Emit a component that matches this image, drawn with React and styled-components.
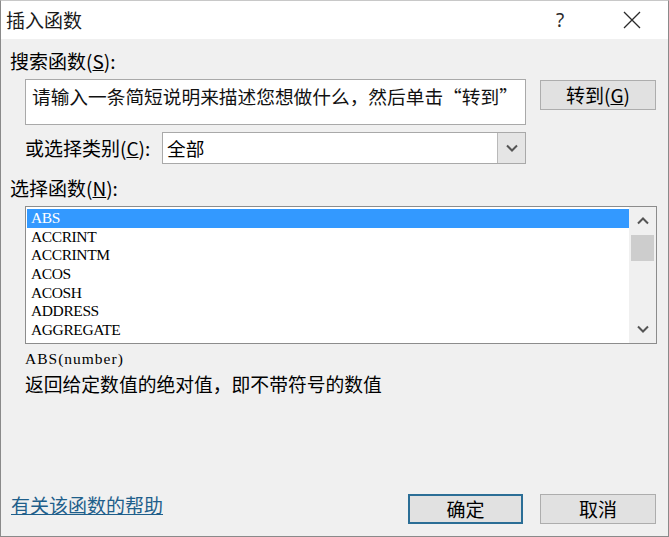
import React from "react";
import styled, { createGlobalStyle } from "styled-components";

const GlobalStyle = createGlobalStyle`
  html, body { margin: 0; padding: 0; background: #ffffff; }
  * { box-sizing: border-box; }
`;

const CJK = `"Noto Sans CJK SC", "Noto Sans", sans-serif`;
const SERIF = `"Liberation Serif", serif`;

const Dialog = styled.div`
  width: 669px;
  height: 537px;
  display: flex;
  flex-direction: column;
  border: 1px solid #8a8a8a;
  border-top-color: #c8c8c8;
  background: #f0f0f0;
  font-family: ${CJK};
  color: #000;
`;

const TitleBar = styled.div`
  height: 38px;
  flex: none;
  display: flex;
  align-items: center;
  background: #ffffff;
`;

const Title = styled.div`
  flex: 1;
  margin-left: 5px;
  font-size: 19px;
  line-height: 24px;
  color: #1a1a1a;
`;

const TitleButton = styled.div`
  width: 46px;
  height: 38px;
  display: flex;
  align-items: center;
  justify-content: center;
  font-family: "Noto Sans", sans-serif;
  font-size: 19px;
  color: #2a2a2a;
`;

const TitleButtons = styled.div`
  display: flex;
  gap: 26px;
  margin-right: 13px;
`;

const Body = styled.div`
  flex: 1;
  display: flex;
  flex-direction: column;
  padding: 0 12px 12px 9px;
`;

const Label = styled.div`
  flex: none;
  width: ${(p) => (p.$w ? `${p.$w}px` : "auto")};
  font-size: 19px;
  line-height: 24px;
  margin-top: ${(p) => p.$mt}px;
  white-space: nowrap;
`;

const Row = styled.div`
  display: flex;
  align-items: ${(p) => p.$align || "flex-start"};
  margin-top: ${(p) => p.$mt}px;
  margin-left: 15px;
`;

const SearchBox = styled.div`
  width: 501px;
  height: 46px;
  background: #fff;
  border: 1px solid #a9a9a9;
  padding: 4px 6px;
  font-size: 18.7px;
  line-height: 24px;
  white-space: nowrap;
  color: #111;
`;

const Button = styled.div`
  width: ${(p) => p.$w}px;
  height: 30px;
  display: flex;
  align-items: center;
  justify-content: center;
  background: #e1e1e1;
  border: ${(p) => (p.$primary ? "2px solid #2b6e96" : "1px solid #adadad")};
  font-size: 19px;
  line-height: 24px;
  margin-left: ${(p) => p.$ml || 0}px;
  margin-top: ${(p) => p.$mt || 0}px;
`;

const Select = styled.div`
  width: 364px;
  height: 32px;
  display: flex;
  background: #fff;
  border: 1px solid #a9a9a9;
`;

const SelectValue = styled.div`
  flex: 1;
  padding-left: 4px;
  font-size: 18.7px;
  line-height: 30px;
`;

const DropButton = styled.div`
  width: 28px;
  display: flex;
  align-items: center;
  justify-content: center;
  background: #e5e5e5;
  border-left: 1px solid #b9b9b9;
`;

const ListBox = styled.div`
  width: 632px;
  height: 138px;
  margin-top: 6px;
  margin-left: 15px;
  display: flex;
  background: #fff;
  border: 1px solid #8c8c8c;
`;

const Items = styled.div`
  flex: 1;
  padding: 2px 0 0 1px;
`;

const Item = styled.div`
  height: 18.7px;
  padding-left: 4px;
  font-family: ${SERIF};
  font-size: 15.5px;
  letter-spacing: -0.4px;
  line-height: 18.7px;
  color: ${(p) => (p.$selected ? "#fff" : "#000")};
  background: ${(p) => (p.$selected ? "#3399ff" : "transparent")};
`;

const ScrollBar = styled.div`
  width: 27px;
  display: flex;
  flex-direction: column;
  background: #f0f0f0;
`;

const ScrollArrow = styled.div`
  height: 28px;
  display: flex;
  align-items: center;
  justify-content: center;
`;

const Track = styled.div`
  flex: 1;
  display: flex;
  justify-content: center;
`;

const Thumb = styled.div`
  width: 23px;
  height: 26px;
  background: #cdcdcd;
`;

const Syntax = styled.div`
  margin-top: 5px;
  margin-left: 15px;
  font-family: ${SERIF};
  font-size: 15.5px;
  letter-spacing: 1px;
  line-height: 20px;
`;

const Description = styled.div`
  margin-top: 2px;
  margin-left: 15px;
  font-size: 18.8px;
  line-height: 26px;
`;

const Footer = styled.div`
  margin-top: auto;
  display: flex;
  align-items: center;
`;

const HelpLink = styled.a`
  flex: 1;
  margin-left: 1px;
  margin-top: -8px;
  font-size: 19px;
  line-height: 24px;
  color: #1f5f8b;
  text-decoration: underline;
  cursor: pointer;
`;

const Chevron = ({ up }) => (
  <svg width="12" height="8" viewBox="0 0 12 8">
    <path
      d={up ? "M1 6.5 L6 1.5 L11 6.5" : "M1 1.5 L6 6.5 L11 1.5"}
      fill="none"
      stroke="#555"
      strokeWidth="2"
    />
  </svg>
);

const functions = [
  "ABS",
  "ACCRINT",
  "ACCRINTM",
  "ACOS",
  "ACOSH",
  "ADDRESS",
  "AGGREGATE",
];

export default function App() {
  return (
    <>
      <GlobalStyle />
      <Dialog>
        <TitleBar>
          <Title>插入函数</Title>
          <TitleButtons>
            <TitleButton>?</TitleButton>
            <TitleButton>
              <svg width="18" height="18" viewBox="0 0 18 18">
                <path d="M1 1 L17 17 M17 1 L1 17" stroke="#2a2a2a" strokeWidth="1.3" />
              </svg>
            </TitleButton>
          </TitleButtons>
        </TitleBar>
        <Body>
          <Label $mt={10}>
            搜索函数(<u>S</u>):
          </Label>
          <Row $mt={6}>
            <SearchBox>请输入一条简短说明来描述您想做什么，然后单击“转到”</SearchBox>
            <Button $w={116} $ml={14} $mt={1}>
              转到(<u>G</u>)
            </Button>
          </Row>
          <Row $mt={7} $align="center">
            <Label $mt={0} $w={137}>
              或选择类别(<u>C</u>):
            </Label>
            <Select>
              <SelectValue>全部</SelectValue>
              <DropButton>
                <Chevron />
              </DropButton>
            </Select>
          </Row>
          <Label $mt={12}>
            选择函数(<u>N</u>):
          </Label>
          <ListBox>
            <Items>
              {functions.map((f, i) => (
                <Item key={f} $selected={i === 0}>
                  {f}
                </Item>
              ))}
            </Items>
            <ScrollBar>
              <ScrollArrow>
                <Chevron up />
              </ScrollArrow>
              <Track>
                <Thumb />
              </Track>
              <ScrollArrow>
                <Chevron />
              </ScrollArrow>
            </ScrollBar>
          </ListBox>
          <Syntax>ABS(number)</Syntax>
          <Description>返回给定数值的绝对值，即不带符号的数值</Description>
          <Footer>
            <HelpLink>有关该函数的帮助</HelpLink>
            <Button $w={115} $primary>
              确定
            </Button>
            <Button $w={116} $ml={17}>
              取消
            </Button>
          </Footer>
        </Body>
      </Dialog>
    </>
  );
}
